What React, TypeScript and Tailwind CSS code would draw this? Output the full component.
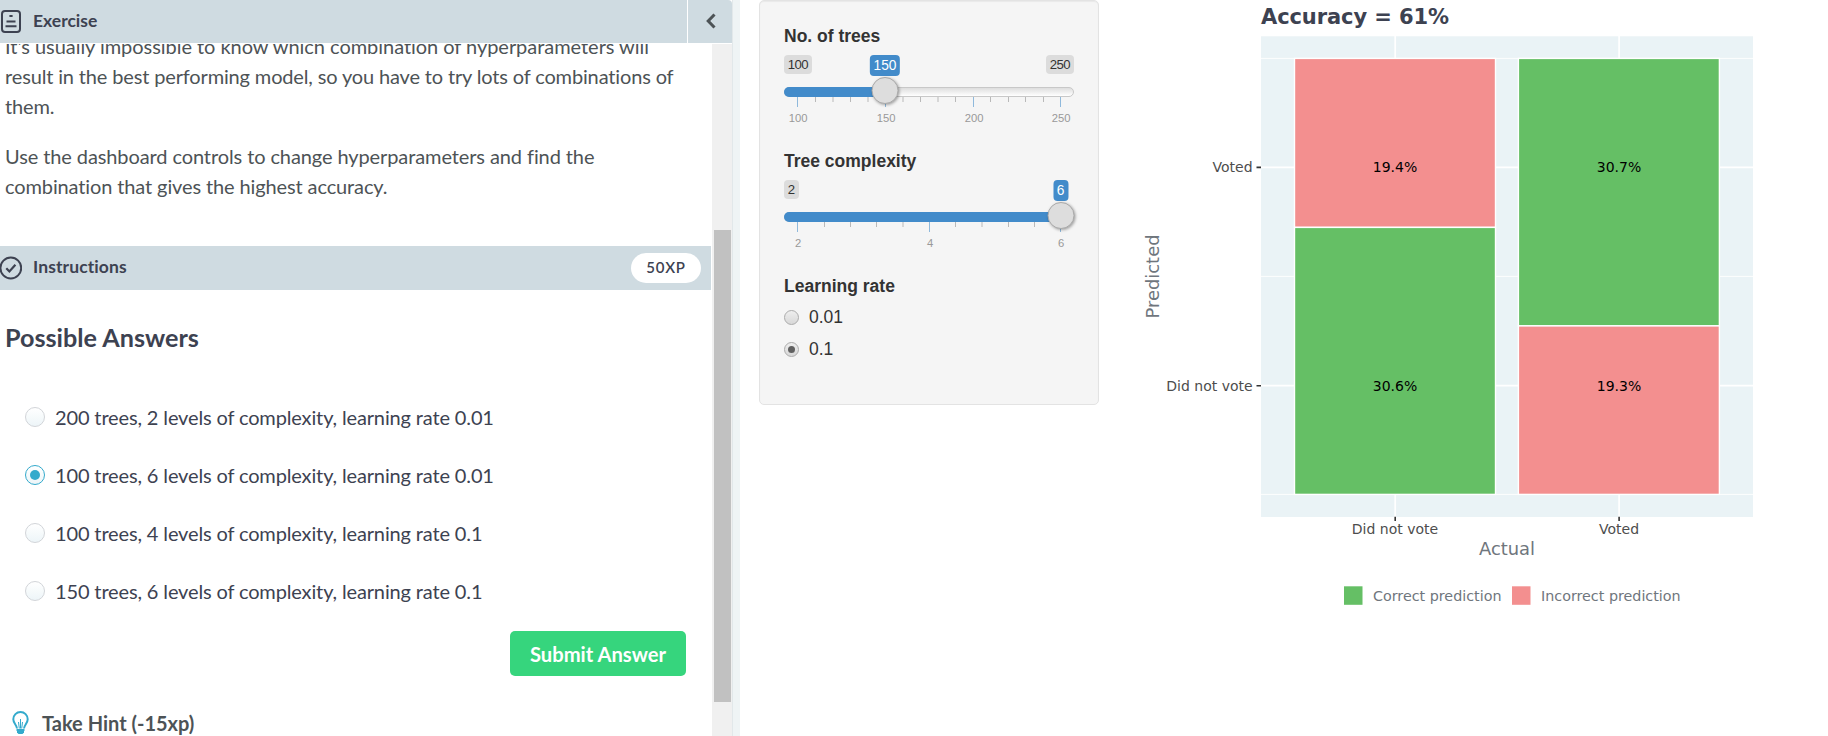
import React from "react";

const options = [
  "200 trees, 2 levels of complexity, learning rate 0.01",
  "100 trees, 6 levels of complexity, learning rate 0.01",
  "100 trees, 4 levels of complexity, learning rate 0.1",
  "150 trees, 6 levels of complexity, learning rate 0.1",
];

type Mark = { x: number; label?: string };

function Slider(props: {
  label: string;
  min: string;
  max?: string;
  value: string;
  position: number;
  marks: Mark[];
}) {
  const { label, min, max, value, position, marks } = props;
  return (
    <div className="h-[125px]">
      <div className="h-[31px] text-[17.5px] leading-[25px] font-bold">{label}</div>
      <div className="relative flex h-8 items-start justify-between text-[13.2px] leading-[19px] tracking-[-0.6px]">
        <span className="rounded-[4px] bg-[#dcdcdc] pr-[4px] pl-[3.8px]">{min}</span>
        {max && <span className="rounded-[4px] bg-[#dcdcdc] pr-[4px] pl-[3.8px]">{max}</span>}
        <span
          className="absolute top-0 -translate-x-1/2 rounded-[4px] bg-[#428bca] px-[3.7px] text-[13.75px] leading-[21px] tracking-normal text-white"
          style={{ left: position }}
        >
          {value}
        </span>
      </div>
      <div className="relative h-[10px] rounded-[5px] border border-[#c8c8c8] bg-linear-to-b from-[#dedede] to-white">
        <div
          className="-mt-px -ml-px h-[10px] rounded-l-[5px] bg-[#428bca]"
          style={{ width: position }}
        />
        <div
          className="absolute -top-[11px] size-[27px] -translate-x-1/2 rounded-full border border-[#aaaaaa] bg-[#dddddd] shadow-[1px_1px_3px_rgba(0,0,0,0.35)]"
          style={{ left: position - 1 }}
        />
      </div>
      <svg width="290" height="30" className="block overflow-visible">
        {marks.map((m) => (
          <g key={m.x}>
            <rect x={m.x} y="0" width="1" height={m.label ? 10 : 5} fill={m.label ? "#8fb9dc" : "#b9b9b9"} />
            {m.label && (
              <text x={m.x + 1.2} y="25" textAnchor="middle" fontSize="11.25" fill="#999999">
                {m.label}
              </text>
            )}
          </g>
        ))}
      </svg>
    </div>
  );
}

const treeMarks: Mark[] = [
  { x: 13, label: "100" }, { x: 31 }, { x: 48.5 }, { x: 66 }, { x: 83.5 },
  { x: 101, label: "150" }, { x: 118.5 }, { x: 136 }, { x: 153.5 }, { x: 171 },
  { x: 189, label: "200" }, { x: 206 }, { x: 224 }, { x: 241 }, { x: 259 },
  { x: 276, label: "250" },
];

const complexityMarks: Mark[] = [
  { x: 13, label: "2" }, { x: 40 }, { x: 66 }, { x: 92 }, { x: 118.5 },
  { x: 145, label: "4" }, { x: 171 }, { x: 197.5 }, { x: 224 }, { x: 250 },
  { x: 276, label: "6" },
];

function RateOption({ label, checked }: { label: string; checked?: boolean }) {
  return (
    <div className="flex h-8 items-center gap-[10px] text-[17.5px]">
      <span className="flex size-[15px] items-center justify-center rounded-full border border-[#ababab] bg-linear-to-b from-[#eeeeee] to-[#d8d8d8]">
        {checked && <span className="size-[7px] rounded-full bg-[#606060]" />}
      </span>
      <span>{label}</span>
    </div>
  );
}

function Chart() {
  return (
    <svg width="700" height="640" viewBox="1120 0 700 640" className="block" fontFamily='"DejaVu Sans", sans-serif'>
      <text x="1261" y="23.5" fontSize="21" fontWeight="bold" fill="#3d4251" textLength="188">Accuracy = 61%</text>
      <rect x="1261" y="36.3" width="492" height="480.7" fill="#eaf3f6" />
      <g stroke="#ffffff">
        <path d="M1261 58.4H1753M1261 276.4H1753M1261 494.4H1753" strokeWidth="0.9" />
        <path d="M1261 167.4H1753M1261 385.7H1753M1395.2 36V517M1619.1 36V517" strokeWidth="1.7" />
      </g>
      <g stroke="#ffffff" strokeWidth="1.4">
        <rect x="1294.5" y="58.4" width="201" height="169" fill="#f38f8f" />
        <rect x="1294.5" y="227.4" width="201" height="267" fill="#65bf65" />
        <rect x="1518.4" y="58.4" width="201" height="267.5" fill="#65bf65" />
        <rect x="1518.4" y="325.9" width="201" height="168.5" fill="#f38f8f" />
      </g>
      <path d="M1256.5 167.4H1261M1256.5 385.7H1261M1395.2 516.7V521M1619.1 516.7V521" stroke="#333333" strokeWidth="1.6" />
      <g fontSize="14" fill="#000000" textAnchor="middle">
        <text x="1395" y="172">19.4%</text>
        <text x="1395" y="391">30.6%</text>
        <text x="1619" y="172">30.7%</text>
        <text x="1619" y="391">19.3%</text>
      </g>
      <g fontSize="14" fill="#4d4d4d">
        <text x="1252.6" y="172" textAnchor="end">Voted</text>
        <text x="1252.6" y="391" textAnchor="end">Did not vote</text>
        <text x="1395" y="534" textAnchor="middle">Did not vote</text>
        <text x="1619" y="534" textAnchor="middle">Voted</text>
      </g>
      <g fontSize="17.9" fill="#6f767d" textAnchor="middle">
        <text x="1507" y="555">Actual</text>
        <text transform="translate(1159 276.5) rotate(-90)">Predicted</text>
      </g>
      <rect x="1344" y="586.3" width="18.5" height="18.5" fill="#65bf65" />
      <rect x="1512" y="586.3" width="18.5" height="18.5" fill="#f38f8f" />
      <g fontSize="14.3" fill="#6f767d">
        <text x="1373" y="601">Correct prediction</text>
        <text x="1541" y="601">Incorrect prediction</text>
      </g>
    </svg>
  );
}

export default function App() {
  return (
    <div className="flex h-[736px] w-[1828px] overflow-hidden bg-white">
      <section className="flex w-[732px] shrink-0 flex-col font-['Lato',sans-serif]">
        <header className="flex h-[43px] shrink-0 overflow-hidden rounded-tr-[4px] bg-[#cfdbe1] text-[#3d4251]">
          <div className="flex w-[687px] items-center">
            <svg width="22" height="24" viewBox="0 0 22 24" fill="none" stroke="currentColor" strokeWidth="2" className="mt-[-2px]">
              <rect x="2" y="2" width="18" height="21" rx="3" />
              <path d="M9.4 7h3.2M6.5 12.5h9M5.5 17.3h11" />
            </svg>
            <h2 className="-mt-px ml-[11px] text-[17.5px] font-bold">Exercise</h2>
          </div>
          <button className="flex flex-1 items-center justify-center border-l border-white text-[#4d5356]">
            <svg width="10" height="16" viewBox="0 0 10 16" fill="none" stroke="currentColor" strokeWidth="3" className="-mt-[2px] ml-px">
              <path d="M8.5 1.5 2.2 8l6.3 6.5" />
            </svg>
          </button>
        </header>
        <div className="mt-px flex min-h-0 flex-1">
          <main className="w-[712px] overflow-hidden">
            <div className="-mt-[13px] w-[700px] pl-[5px] text-[20px] leading-[30px] whitespace-nowrap text-[#4d5356]">
              <p>
                <span className="block tracking-[-0.04px]">It's usually impossible to know which combination of hyperparameters will</span>
                <span className="block tracking-[-0.15px]">result in the best performing model, so you have to try lots of combinations of</span>
                <span className="block tracking-[-0.15px]">them.</span>
              </p>
              <p className="mt-5">
                <span className="block tracking-[-0.1px]">Use the dashboard controls to change hyperparameters and find the</span>
                <span className="block tracking-[-0.12px]">combination that gives the highest accuracy.</span>
              </p>
            </div>
            <div className="mt-[45px] flex h-[44px] w-[711px] items-center bg-[#cfdbe1] pr-[10px] text-[#3d4251]">
              <svg width="22" height="24" viewBox="0 0 22 24" fill="none" stroke="currentColor" strokeWidth="2" className="mt-[-1px]">
                <circle cx="10.8" cy="12" r="10.4" />
                <path d="M6.3 12.3l3.1 3.2 6-6.7" strokeWidth="2.2" />
              </svg>
              <h2 className="-mt-px ml-[11px] text-[17.5px] font-bold tracking-[0.1px]">Instructions</h2>
              <span className="ml-auto flex h-[30px] w-[70px] items-center justify-center rounded-full bg-white pb-px text-[15px] font-semibold tracking-[0.8px]">
                50XP
              </span>
            </div>
            <h3 className="mt-[32px] pl-[5px] text-[25.2px] leading-[30px] font-bold text-[#3d4251]">Possible Answers</h3>
            <div className="mt-[36px]">
              {options.map((text, i) => (
                <label key={text} className="flex h-[58px] items-center pl-[25px] text-[20px] text-[#3d4251]">
                  <span
                    className={
                      i === 1
                        ? "flex size-5 items-center justify-center rounded-full border border-[#33aacc] bg-linear-to-b from-white to-[#edf5f8]"
                        : "size-5 rounded-full border border-[#d2d5d9] bg-linear-to-b from-white to-[#edf5f8]"
                    }
                  >
                    {i === 1 && <span className="size-[10px] rounded-full bg-[#33aacc]" />}
                  </span>
                  <span className="ml-[10px] tracking-[-0.14px]">{text}</span>
                </label>
              ))}
            </div>
            <div className="mt-[11px] flex justify-end pr-[26px]">
              <button className="h-[45px] w-[176px] rounded-[5px] bg-[#36d57d] pt-[2px] text-[20.2px] font-bold text-white">Submit Answer</button>
            </div>
            <div className="mt-[32px] flex items-center pl-3 text-[#4d5356]">
              <svg width="17" height="24" viewBox="0 0 17 24" fill="none" stroke="#33aacc" strokeWidth="2">
                <path d="M5 17.5C5 14 1.3 12.7 1.3 8.2a7.2 7.2 0 0 1 14.4 0C15.7 12.7 12 14 12 17.5" />
                <path d="M8.5 8v9.5M6.5 11l.8 6.5M10.5 11l-.8 6.5" strokeWidth="1" />
                <path d="M4.5 19h8" strokeWidth="2" />
                <path d="M5 20h7v1.5L10.5 23h-4L5 21.5z" fill="#33aacc" stroke="none" />
              </svg>
              <span className="ml-[13px] text-[20px] leading-[30px] font-bold">Take Hint (-15xp)</span>
            </div>
          </main>
          <div className="w-5 bg-[#f0f0f0] pt-[186px] pl-[2px]">
            <div className="h-[472px] w-[17px] bg-[#c1c1c1]" />
          </div>
        </div>
      </section>
      <div className="w-2 shrink-0 border-l border-[#e2e8ea] bg-[#eff4f5]" />
      <aside className="ml-[19px] h-[405px] w-[340px] shrink-0 rounded-[5px] border border-[#e3e3e3] bg-[#f5f5f5] px-6 pt-[23px] font-['Liberation_Sans',Arial,sans-serif] text-[#333333] shadow-[inset_0_1px_1px_rgba(0,0,0,0.05)]">
        <Slider label="No. of trees" min="100" max="250" value="150" position={101} marks={treeMarks} />
        <Slider label="Tree complexity" min="2" value="6" position={276.5} marks={complexityMarks} />
        <div className="text-[17.5px] leading-[25px] font-bold">Learning rate</div>
        <div className="mt-[2px]">
          <RateOption label="0.01" />
          <RateOption label="0.1" checked />
        </div>
      </aside>
      <div className="ml-[21px] shrink-0">
        <Chart />
      </div>
    </div>
  );
}
